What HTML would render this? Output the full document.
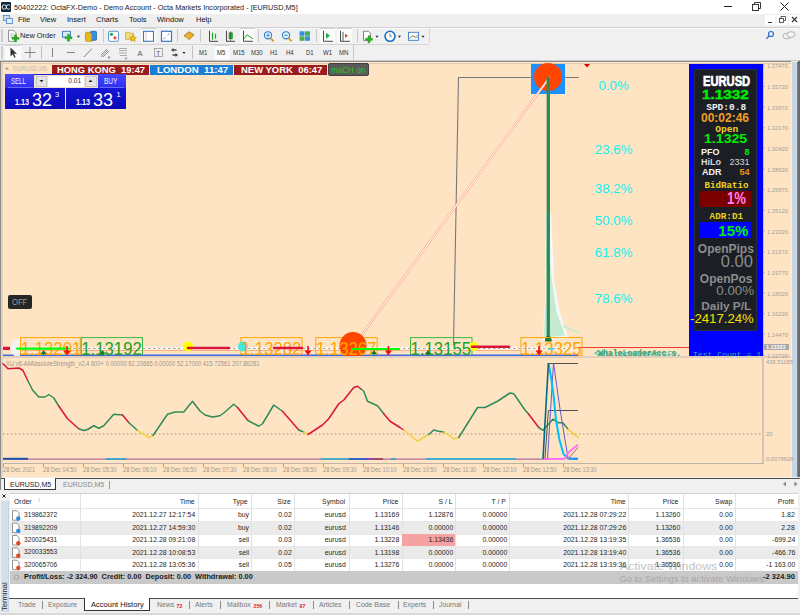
<!DOCTYPE html><html><head><meta charset="utf-8"><style>html,body{margin:0;padding:0;}body{width:800px;height:615px;overflow:hidden;position:relative;background:#f0f0f0;font-family:"Liberation Sans",sans-serif;}div{box-sizing:border-box;}svg{position:absolute;left:0;top:0;}</style></head><body><div style="position:absolute;left:0px;top:0px;width:800px;height:14px;background:#fff;"></div><div style="position:absolute;left:1px;top:2px;width:10px;height:10px;background:#10263a;border-radius:1px;"></div><svg width="800" height="14" style="left:0;top:0"><g fill="none" stroke="#e8eef4" stroke-width="1"><circle cx="4.3" cy="7" r="2.2"/><path d="M9.8 5.3 A2.2 2.2 0 1 0 9.8 8.7"/></g><g stroke="#222" stroke-width="1"><line x1="724" y1="6.5" x2="732" y2="6.5"/></g><g fill="none" stroke="#222" stroke-width="0.9"><rect x="752.5" y="4.5" width="6" height="6"/><path d="M754.5 4.5 V2.5 H760.5 V8.5 H758.5"/></g><g stroke="#222" stroke-width="1"><line x1="780.5" y1="2.5" x2="788.5" y2="10.5"/><line x1="788.5" y1="2.5" x2="780.5" y2="10.5"/></g></svg><div style="position:absolute;left:14px;top:3.6px;font-family:'Liberation Sans', sans-serif;font-size:7.7px;line-height:1;color:#222;font-weight:400;white-space:nowrap;transform:scaleX(0.95);transform-origin:0 0;">50402222: OctaFX-Demo - Demo Account - Octa Markets Incorporated - [EURUSD,M5]</div><div style="position:absolute;left:0px;top:14px;width:800px;height:13px;background:#efefef;"></div><div style="position:absolute;left:0px;top:26.6px;width:800px;height:1px;background:#d0d0d0;"></div><div style="position:absolute;left:0px;top:27.6px;width:800px;height:1px;background:#fafafa;"></div><svg width="20" height="14" style="left:0;top:13px"><rect x="3.5" y="2.5" width="6" height="5" fill="#cfe0f5" stroke="#4a7fc0" stroke-width="0.8"/><rect x="6.5" y="5.5" width="6" height="5" fill="#e4eefa" stroke="#4a7fc0" stroke-width="0.8"/></svg><div style="position:absolute;left:17.5px;top:16.3px;font-family:'Liberation Sans', sans-serif;font-size:8.1px;line-height:1;color:#111;font-weight:400;white-space:nowrap;transform:scaleX(0.93);transform-origin:0 0;">File</div><div style="position:absolute;left:39.8px;top:16.3px;font-family:'Liberation Sans', sans-serif;font-size:8.1px;line-height:1;color:#111;font-weight:400;white-space:nowrap;transform:scaleX(0.93);transform-origin:0 0;">View</div><div style="position:absolute;left:66.5px;top:16.3px;font-family:'Liberation Sans', sans-serif;font-size:8.1px;line-height:1;color:#111;font-weight:400;white-space:nowrap;transform:scaleX(0.93);transform-origin:0 0;">Insert</div><div style="position:absolute;left:96px;top:16.3px;font-family:'Liberation Sans', sans-serif;font-size:8.1px;line-height:1;color:#111;font-weight:400;white-space:nowrap;transform:scaleX(0.93);transform-origin:0 0;">Charts</div><div style="position:absolute;left:128.6px;top:16.3px;font-family:'Liberation Sans', sans-serif;font-size:8.1px;line-height:1;color:#111;font-weight:400;white-space:nowrap;transform:scaleX(0.93);transform-origin:0 0;">Tools</div><div style="position:absolute;left:157.4px;top:16.3px;font-family:'Liberation Sans', sans-serif;font-size:8.1px;line-height:1;color:#111;font-weight:400;white-space:nowrap;transform:scaleX(0.93);transform-origin:0 0;">Window</div><div style="position:absolute;left:195.9px;top:16.3px;font-family:'Liberation Sans', sans-serif;font-size:8.1px;line-height:1;color:#111;font-weight:400;white-space:nowrap;transform:scaleX(0.93);transform-origin:0 0;">Help</div><svg width="40" height="14" style="left:762px;top:13px"><rect x="3" y="2" width="10" height="10" fill="#fff"/><rect x="14.5" y="2" width="11" height="10" fill="#fff"/><rect x="27" y="2" width="11" height="10" fill="#fff"/><line x1="6" y1="9.5" x2="10" y2="9.5" stroke="#333" stroke-width="1"/><rect x="17.5" y="5.5" width="4" height="4" fill="none" stroke="#333" stroke-width="0.8"/><path d="M19 5.5V3.5H23.5V7.5H21.5" fill="none" stroke="#333" stroke-width="0.8"/><path d="M30 4L35 9M35 4L30 9" stroke="#333" stroke-width="1.1"/></svg><div style="position:absolute;left:0px;top:28.6px;width:430px;height:14.5px;background:#f0f0f0;"></div><div style="position:absolute;left:0px;top:43.5px;width:429px;height:1px;background:#d4d4d4;"></div><div style="position:absolute;left:0px;top:60px;width:800px;height:1px;background:#c8c8c8;"></div><svg width="800" height="62" style="left:0;top:0"><line x1="2" y1="29" x2="2" y2="42" stroke="#b8b8b8" stroke-width="1.2"/><line x1="2" y1="46" x2="2" y2="59" stroke="#b8b8b8" stroke-width="1.2"/><line x1="103.5" y1="29" x2="103.5" y2="42" stroke="#c8c8c8" stroke-width="1"/><line x1="177.5" y1="29" x2="177.5" y2="42" stroke="#c8c8c8" stroke-width="1"/><line x1="200.5" y1="29" x2="200.5" y2="42" stroke="#c8c8c8" stroke-width="1"/><line x1="258.5" y1="29" x2="258.5" y2="42" stroke="#c8c8c8" stroke-width="1"/><line x1="316.5" y1="29" x2="316.5" y2="42" stroke="#c8c8c8" stroke-width="1"/><line x1="357.5" y1="29" x2="357.5" y2="42" stroke="#c8c8c8" stroke-width="1"/><line x1="429.5" y1="27" x2="429.5" y2="43" stroke="#d8d8d8" stroke-width="1"/><line x1="41.5" y1="46" x2="41.5" y2="59" stroke="#c0c0c0" stroke-width="1"/><line x1="192.5" y1="46" x2="192.5" y2="59" stroke="#c0c0c0" stroke-width="1"/><line x1="353.5" y1="44" x2="353.5" y2="60" stroke="#c8c8c8" stroke-width="1"/><rect x="141" y="28" width="15" height="15" fill="#fbfbfb"/><line x1="141" y1="28.5" x2="156" y2="28.5" stroke="#d4d4d4"/><rect x="240" y="28" width="15" height="15" fill="#fbfbfb"/><line x1="240" y1="28.5" x2="255" y2="28.5" stroke="#d4d4d4"/><rect x="320" y="28" width="15" height="15" fill="#fbfbfb"/><line x1="320" y1="28.5" x2="335" y2="28.5" stroke="#d4d4d4"/><rect x="337" y="28" width="15" height="15" fill="#fbfbfb"/><line x1="337" y1="28.5" x2="352" y2="28.5" stroke="#d4d4d4"/><rect x="5" y="45" width="16" height="15" fill="#fbfbfb"/><line x1="5" y1="45.5" x2="21" y2="45.5" stroke="#d4d4d4"/><rect x="214.5" y="45" width="15.0" height="15" fill="#fbfbfb"/><line x1="214.5" y1="45.5" x2="229.5" y2="45.5" stroke="#d4d4d4"/><g transform="translate(0,0.8)"><path d="M8.5 29.5H13.5L16 32V40.5H8.5Z" fill="#fff" stroke="#777" stroke-width="0.8"/><path d="M10 33h4M10 35h4M10 37h3" stroke="#999" stroke-width="0.6"/><path d="M14.5 34h2v2.5h2.5v2h-2.5v2.5h-2v-2.5h-2.5v-2h2.5z" fill="#22aa22" stroke="#118811" stroke-width="0.4"/><rect x="62.5" y="30.5" width="8" height="6" fill="#d8e8f8" stroke="#3a78c0" stroke-width="0.9"/><path d="M67.5 33.5h2v2.5h2.5v2h-2.5v2.5h-2v-2.5h-2.5v-2h2.5z" fill="#22bb22" stroke="#118811" stroke-width="0.4"/><path d="M77 35h3l-1.5 2z" fill="#222"/><rect x="85.5" y="31.5" width="7" height="9" rx="1" fill="#f0c020" stroke="#b08000" stroke-width="0.7"/><rect x="90.5" y="30.5" width="6" height="9" rx="1" fill="#3a8ee0" stroke="#2060a0" stroke-width="0.7"/><rect x="86.5" y="32.5" width="5" height="7" fill="#e8b818"/><rect x="108.5" y="30.5" width="10" height="10" rx="1.5" fill="#fff" stroke="#4f8fd0" stroke-width="0.9"/><circle cx="111.5" cy="33.5" r="1.6" fill="#22aa44"/><circle cx="115" cy="37" r="1.6" fill="#e05030"/><path d="M125.5 31.5h4l1 1h3v6h-8z" fill="#f2dc80" stroke="#c0a030" stroke-width="0.7"/><path d="M133 34l1.1 2.3 2.4.3-1.8 1.6.5 2.4-2.2-1.2-2.2 1.2.5-2.4-1.8-1.6 2.4-.3z" fill="#f4c400" stroke="#b08800" stroke-width="0.5"/><rect x="143.5" y="30.5" width="10" height="10" fill="#fff" stroke="#3a78c0" stroke-width="1.1"/><line x1="146" y1="31" x2="146" y2="40" stroke="#e07070" stroke-width="0.8" stroke-dasharray="1 1"/><rect x="161.5" y="30.5" width="10" height="10" fill="#fff" stroke="#3a78c0" stroke-width="1.2"/><path d="M163.5 38.5l2-2M169.5 32.5l-2 2" stroke="#3a78c0" stroke-width="0.8"/><path d="M184 35l5-4 5 3-5 5z" fill="#e8b030" stroke="#a07010" stroke-width="0.8"/><path d="M185 36l4 3" stroke="#fff3c0" stroke-width="0.6"/><path d="M209.5 30v10.5H218" fill="none" stroke="#333" stroke-width="0.9"/><path d="M212.5 32v7M215.5 33v5" stroke="#22aa22" stroke-width="1.2"/><path d="M226.5 30v10.5H235" fill="none" stroke="#333" stroke-width="0.9"/><rect x="229" y="32" width="3.5" height="6" fill="#22bb22" stroke="#118811" stroke-width="0.5"/><line x1="230.7" y1="30.5" x2="230.7" y2="40" stroke="#333" stroke-width="0.6"/><path d="M243.5 30v10.5H253" fill="none" stroke="#333" stroke-width="0.9"/><path d="M244 38l3-4 3 2 3 2" fill="none" stroke="#22aa22" stroke-width="1"/><circle cx="268" cy="34.5" r="3.6" fill="#e8f2fc" stroke="#2a80d0" stroke-width="1.1"/><line x1="270.6" y1="37.2" x2="273.5" y2="40.5" stroke="#d09a20" stroke-width="1.8"/><line x1="266.2" y1="34.5" x2="269.8" y2="34.5" stroke="#2a80d0" stroke-width="0.9"/><line x1="268" y1="32.7" x2="268" y2="36.3" stroke="#2a80d0" stroke-width="0.9"/><circle cx="286" cy="34.5" r="3.6" fill="#e8f2fc" stroke="#2a80d0" stroke-width="1.1"/><line x1="288.6" y1="37.2" x2="291.5" y2="40.5" stroke="#d09a20" stroke-width="1.8"/><line x1="284.2" y1="34.5" x2="287.8" y2="34.5" stroke="#2a80d0" stroke-width="0.9"/><rect x="299.5" y="30.5" width="5" height="4.5" fill="#3a8ee0"/><rect x="305" y="30.5" width="5" height="4.5" fill="#4caf50"/><rect x="299.5" y="35.5" width="5" height="4.5" fill="#4caf50"/><rect x="305" y="35.5" width="5" height="4.5" fill="#3a8ee0"/><path d="M323.5 30v10.5H333" fill="none" stroke="#333" stroke-width="0.9"/><path d="M326 32v6l4-3z" fill="#22aa44"/><path d="M340.5 30v10.5H350" fill="none" stroke="#333" stroke-width="0.9"/><line x1="343" y1="31" x2="343" y2="40" stroke="#333" stroke-width="0.8"/><path d="M345 33v4l3-2z" fill="#e04020"/><path d="M363.5 30.5H368.5L370.5 32.5V39.5H363.5Z" fill="#fff" stroke="#666" stroke-width="0.8"/><path d="M368 35h2v2.5h2.5v2h-2.5v2.5h-2v-2.5h-2.5v-2h2.5z" fill="#22bb22" stroke="#118811" stroke-width="0.4"/><path d="M375.5 35h3l-1.5 2z" fill="#222"/><circle cx="390" cy="35.5" r="5" fill="#fff" stroke="#1a70c0" stroke-width="1.6"/><path d="M390 32.5v3h2" stroke="#555" stroke-width="0.7" fill="none"/><path d="M398 35h3l-1.5 2z" fill="#222"/><rect x="408.5" y="31.5" width="10" height="8" fill="#fff" stroke="#3a78c0" stroke-width="0.9"/><path d="M409.5 37l3-2 3 1 2.5-2" stroke="#e04040" stroke-width="0.6" fill="none"/><path d="M409.5 38l3-3 3 2 2.5-1" stroke="#22aa22" stroke-width="0.6" fill="none"/><path d="M421.5 35h3l-1.5 2z" fill="#222"/></g><circle cx="771" cy="34" r="2.5" fill="none" stroke="#2a70d0" stroke-width="1.2"/><line x1="769.3" y1="35.8" x2="766.5" y2="38.8" stroke="#2a70d0" stroke-width="1.3"/><ellipse cx="787" cy="36" rx="4" ry="2.8" fill="#f4f4f4" stroke="#999" stroke-width="0.7"/><ellipse cx="791" cy="34.5" rx="4" ry="2.8" fill="#f4f4f4" stroke="#999" stroke-width="0.7"/><path d="M10.5 47.5v9l2.2-2.2 1.8 3.5 1.2-.6-1.8-3.4h3z" fill="#333"/><path d="M30 47v11M24.5 52.5h11" stroke="#777" stroke-width="0.9"/><line x1="52.5" y1="48" x2="52.5" y2="57" stroke="#777" stroke-width="0.9"/><line x1="67" y1="52.5" x2="75" y2="52.5" stroke="#777" stroke-width="0.9"/><line x1="84" y1="57" x2="92" y2="48.5" stroke="#777" stroke-width="0.9"/><path d="M101 55l6-6M101 57l7-7M103 57l6-6" stroke="#777" stroke-width="0.8"/><text x="108" y="59" font-size="3.5" fill="#555" font-family="Liberation Sans">E</text><path d="M119 48.5h8M119 50.5h8M119 53h8M120 55.5h7" stroke="#999" stroke-width="0.8"/><text x="125" y="59.5" font-size="3.5" fill="#555" font-family="Liberation Sans">F</text><text x="137.5" y="56" font-size="7.5" fill="#555" font-family="Liberation Sans">A</text><rect x="154.5" y="48.5" width="8" height="8" fill="none" stroke="#888" stroke-width="0.7"/><text x="156.3" y="55.6" font-size="6.5" fill="#555" font-family="Liberation Sans">T</text><path d="M171 50l2.5-2v1.3h3v1.4h-3V52zM178 55l-2.5 2v-1.3h-3v-1.4h3V53z" fill="#444"/><path d="M182.5 52h3l-1.5 2z" fill="#222"/></svg><div style="position:absolute;left:20px;top:31.5px;font-family:'Liberation Sans', sans-serif;font-size:8px;line-height:1;color:#222;font-weight:400;white-space:nowrap;transform:scaleX(0.92);transform-origin:0 0;">New Order</div><div style="position:absolute;left:199.4px;top:49.5px;font-family:'Liberation Sans', sans-serif;font-size:6.3px;line-height:1;color:#333;font-weight:400;white-space:nowrap;transform:scaleX(0.95);transform-origin:0 0;">M1</div><div style="position:absolute;left:217px;top:49.5px;font-family:'Liberation Sans', sans-serif;font-size:6.3px;line-height:1;color:#333;font-weight:400;white-space:nowrap;transform:scaleX(0.95);transform-origin:0 0;">M5</div><div style="position:absolute;left:233px;top:49.5px;font-family:'Liberation Sans', sans-serif;font-size:6.3px;line-height:1;color:#333;font-weight:400;white-space:nowrap;transform:scaleX(0.95);transform-origin:0 0;">M15</div><div style="position:absolute;left:251px;top:49.5px;font-family:'Liberation Sans', sans-serif;font-size:6.3px;line-height:1;color:#333;font-weight:400;white-space:nowrap;transform:scaleX(0.95);transform-origin:0 0;">M30</div><div style="position:absolute;left:270px;top:49.5px;font-family:'Liberation Sans', sans-serif;font-size:6.3px;line-height:1;color:#333;font-weight:400;white-space:nowrap;transform:scaleX(0.95);transform-origin:0 0;">H1</div><div style="position:absolute;left:286px;top:49.5px;font-family:'Liberation Sans', sans-serif;font-size:6.3px;line-height:1;color:#333;font-weight:400;white-space:nowrap;transform:scaleX(0.95);transform-origin:0 0;">H4</div><div style="position:absolute;left:305.5px;top:49.5px;font-family:'Liberation Sans', sans-serif;font-size:6.3px;line-height:1;color:#333;font-weight:400;white-space:nowrap;transform:scaleX(0.95);transform-origin:0 0;">D1</div><div style="position:absolute;left:322.5px;top:49.5px;font-family:'Liberation Sans', sans-serif;font-size:6.3px;line-height:1;color:#333;font-weight:400;white-space:nowrap;transform:scaleX(0.95);transform-origin:0 0;">W1</div><div style="position:absolute;left:339px;top:49.5px;font-family:'Liberation Sans', sans-serif;font-size:6.3px;line-height:1;color:#333;font-weight:400;white-space:nowrap;transform:scaleX(0.95);transform-origin:0 0;">MN</div><div style="position:absolute;left:0px;top:61px;width:800px;height:416px;background:#ffe4c4;"></div><div style="position:absolute;left:0px;top:61px;width:800px;height:1px;background:#8c8c8c;"></div><div style="position:absolute;left:0px;top:61px;width:1px;height:416px;background:#8a8a8a;"></div><div style="position:absolute;left:1px;top:62px;width:2px;height:415px;background:#e6d2bc;"></div><div style="position:absolute;left:3px;top:63px;width:789px;height:1px;background:#e0cdb8;"></div><div style="position:absolute;left:791px;top:61px;width:9px;height:417px;background:#f0f0f0;"></div><div style="position:absolute;left:792px;top:62px;width:5px;height:416px;background:#c6d6e6;"></div><div style="position:absolute;left:797px;top:62px;width:1px;height:416px;background:#5a8ab0;"></div><div style="position:absolute;left:798px;top:61px;width:2px;height:417px;background:#6a6a6a;"></div><svg width="800" height="615" style="left:0;top:0"><line x1="763" y1="64" x2="763" y2="356" stroke="#a0a0a0" stroke-width="1"/><line x1="763" y1="358" x2="763" y2="464" stroke="#a8a8a8" stroke-width="1"/><rect x="3" y="356" width="788" height="2" fill="#e2cfbb"/><line x1="3" y1="463.5" x2="763" y2="463.5" stroke="#bcb4aa" stroke-width="1"/><line x1="3.5" y1="464" x2="3.5" y2="467" stroke="#a0a0a0" stroke-width="1"/><line x1="43.5" y1="464" x2="43.5" y2="467" stroke="#a0a0a0" stroke-width="1"/><line x1="83.5" y1="464" x2="83.5" y2="467" stroke="#a0a0a0" stroke-width="1"/><line x1="123.5" y1="464" x2="123.5" y2="467" stroke="#a0a0a0" stroke-width="1"/><line x1="163.5" y1="464" x2="163.5" y2="467" stroke="#a0a0a0" stroke-width="1"/><line x1="203.5" y1="464" x2="203.5" y2="467" stroke="#a0a0a0" stroke-width="1"/><line x1="243.5" y1="464" x2="243.5" y2="467" stroke="#a0a0a0" stroke-width="1"/><line x1="283.5" y1="464" x2="283.5" y2="467" stroke="#a0a0a0" stroke-width="1"/><line x1="323.5" y1="464" x2="323.5" y2="467" stroke="#a0a0a0" stroke-width="1"/><line x1="363.5" y1="464" x2="363.5" y2="467" stroke="#a0a0a0" stroke-width="1"/><line x1="403.5" y1="464" x2="403.5" y2="467" stroke="#a0a0a0" stroke-width="1"/><line x1="443.5" y1="464" x2="443.5" y2="467" stroke="#a0a0a0" stroke-width="1"/><line x1="483.5" y1="464" x2="483.5" y2="467" stroke="#a0a0a0" stroke-width="1"/><line x1="523.5" y1="464" x2="523.5" y2="467" stroke="#a0a0a0" stroke-width="1"/><line x1="563.5" y1="464" x2="563.5" y2="467" stroke="#a0a0a0" stroke-width="1"/><line x1="763" y1="65.8" x2="764.8" y2="65.8" stroke="#a8a8a8" stroke-width="1"/><line x1="763" y1="86.4" x2="764.8" y2="86.4" stroke="#a8a8a8" stroke-width="1"/><line x1="763" y1="107.1" x2="764.8" y2="107.1" stroke="#a8a8a8" stroke-width="1"/><line x1="763" y1="127.8" x2="764.8" y2="127.8" stroke="#a8a8a8" stroke-width="1"/><line x1="763" y1="148.4" x2="764.8" y2="148.4" stroke="#a8a8a8" stroke-width="1"/><line x1="763" y1="169.1" x2="764.8" y2="169.1" stroke="#a8a8a8" stroke-width="1"/><line x1="763" y1="189.7" x2="764.8" y2="189.7" stroke="#a8a8a8" stroke-width="1"/><line x1="763" y1="210.3" x2="764.8" y2="210.3" stroke="#a8a8a8" stroke-width="1"/><line x1="763" y1="231.0" x2="764.8" y2="231.0" stroke="#a8a8a8" stroke-width="1"/><line x1="763" y1="251.6" x2="764.8" y2="251.6" stroke="#a8a8a8" stroke-width="1"/><line x1="763" y1="272.3" x2="764.8" y2="272.3" stroke="#a8a8a8" stroke-width="1"/><line x1="763" y1="292.9" x2="764.8" y2="292.9" stroke="#a8a8a8" stroke-width="1"/><line x1="763" y1="313.6" x2="764.8" y2="313.6" stroke="#a8a8a8" stroke-width="1"/><line x1="763" y1="334.2" x2="764.8" y2="334.2" stroke="#a8a8a8" stroke-width="1"/><line x1="763" y1="354.9" x2="764.8" y2="354.9" stroke="#a8a8a8" stroke-width="1"/><defs><clipPath id="mc"><rect x="3" y="62" width="760" height="294"/></clipPath></defs><g clip-path="url(#mc)"><path d="M453.5 345L458.5 77.5H579" fill="none" stroke="#787878" stroke-width="1.1"/><rect x="531" y="64" width="34" height="30" fill="#1e90ff"/><circle cx="548" cy="77" r="14" fill="#ff4500"/><path d="M584 64h6l-3 3.5z" fill="#e00000"/><path d="M546 212 L545 300 L542.5 341 L568 338 L559 312 L553.5 282 L550.5 212 Z" fill="#eef8f8" /><path d="M546.5 214 L545.5 300 L543.5 338 L549 338 L549 214 Z" fill="#c8ecd4"/><path d="M549 250 L549 337 L565 335.5 L556.5 312 L552 282 Z" fill="#c4ead2"/><path d="M550.5 215 L553.5 282 L559 312 L567.5 338" fill="none" stroke="#f4fbff" stroke-width="1.2"/><path d="M563 326 L579 333" stroke="#c4ead2" stroke-width="1.5"/><line x1="549.8" y1="77" x2="354.4" y2="345" stroke="#ff9a78" stroke-width="2.3"/><line x1="549.8" y1="77" x2="354.4" y2="345" stroke="#ffffff" stroke-width="1.1"/><line x1="548.3" y1="77" x2="548.3" y2="338" stroke="#2e8b57" stroke-width="3.3"/><path d="M544.8 341.5 Q545 336 548.3 335.5 Q551.6 336 551.8 341.5z" fill="#1a7a30"/><line x1="578" y1="347.5" x2="690" y2="347.5" stroke="#f03a30" stroke-width="1"/><line x1="3" y1="348.5" x2="578" y2="348.5" stroke="#ffffff" stroke-width="1.8"/><line x1="3" y1="348.5" x2="578" y2="348.5" stroke="#909090" stroke-width="0.8" stroke-dasharray="2.5 2.5"/><line x1="20" y1="350.5" x2="520" y2="350.5" stroke="#ffa060" stroke-width="0.8"/><line x1="3" y1="348.8" x2="10" y2="348.8" stroke="#dc143c" stroke-width="2.4"/><rect x="20.5" y="337.6" width="59.7" height="18" fill="none" stroke="#ffa500" stroke-width="1"/><rect x="81.2" y="337.6" width="61.3" height="18" fill="none" stroke="#3cb83c" stroke-width="1"/><rect x="240.9" y="337.6" width="61.099999999999994" height="18" fill="none" stroke="#ffa500" stroke-width="1"/><rect x="315.8" y="337.6" width="61.30000000000001" height="18" fill="none" stroke="#ffa500" stroke-width="1"/><rect x="410.5" y="337.6" width="61.5" height="18" fill="none" stroke="#3cb83c" stroke-width="1"/><rect x="521.0" y="337.6" width="61.0" height="18" fill="none" stroke="#ffa500" stroke-width="1"/><line x1="3" y1="355.4" x2="578" y2="355.4" stroke="#4169e1" stroke-width="1.6"/><path d="M20 338.5 A9.5 9.5 0 0 0 20 357.5 Z" fill="#f2f2f6"/><circle cx="188" cy="346.5" r="5" fill="#ffff00"/><circle cx="474" cy="346.5" r="4.5" fill="#ffff00"/><circle cx="243" cy="346.5" r="5" fill="#40e8e8"/><circle cx="284" cy="346" r="6" fill="#f4f0ec"/><circle cx="353" cy="345.5" r="13.5" fill="#ff4500"/><text transform="translate(20.8,355.3) scale(0.905,1)" font-family="Liberation Sans" font-size="18.5" fill="#ffa500">1.13201</text><text transform="translate(81.3,355.3) scale(0.905,1)" font-family="Liberation Sans" font-size="18.5" fill="#22a022">1.13192</text><text transform="translate(240.9,355.3) scale(0.905,1)" font-family="Liberation Sans" font-size="18.5" fill="#ffa500">1.13282</text><text transform="translate(315.9,355.3) scale(0.905,1)" font-family="Liberation Sans" font-size="18.5" fill="#ffa500">1.13267</text><text transform="translate(410.6,355.3) scale(0.905,1)" font-family="Liberation Sans" font-size="18.5" fill="#22a022">1.13155</text><text transform="translate(521.1,355.3) scale(0.905,1)" font-family="Liberation Sans" font-size="18.5" fill="#ffa500">1.13325</text><line x1="188" y1="348" x2="229" y2="348" stroke="#dc143c" stroke-width="2.6" stroke-linecap="round"/><line x1="274" y1="348" x2="302" y2="348" stroke="#dc143c" stroke-width="2.6" stroke-linecap="round"/><line x1="472" y1="346.8" x2="509" y2="346.8" stroke="#dc143c" stroke-width="2.6" stroke-linecap="round"/><line x1="3" y1="348" x2="10" y2="348" stroke="#dc143c" stroke-width="2.4"/><line x1="17" y1="348.6" x2="68" y2="348.6" stroke="#00ff00" stroke-width="2.2" stroke-linecap="round"/><line x1="352" y1="349" x2="399" y2="349" stroke="#00ff00" stroke-width="2.2" stroke-linecap="round"/><path d="M40.5 354l3-4 3 4z" fill="#1a7a1a"/><line x1="43.5" y1="352" x2="43.5" y2="356" stroke="#1a7a1a" stroke-width="1"/><path d="M99.5 354l3-4 3 4z" fill="#1a7a1a"/><line x1="102.5" y1="352" x2="102.5" y2="356" stroke="#1a7a1a" stroke-width="1"/><path d="M371 354l3-4 3 4z" fill="#1a7a1a"/><line x1="374" y1="352" x2="374" y2="356" stroke="#1a7a1a" stroke-width="1"/><path d="M425 354l3-4 3 4z" fill="#1a7a1a"/><line x1="428" y1="352" x2="428" y2="356" stroke="#1a7a1a" stroke-width="1"/><path d="M63.5 350.5l3.5 5 3.5-5z" fill="#ee1111"/><line x1="67" y1="346" x2="67" y2="352" stroke="#ee1111" stroke-width="1.6"/><path d="M304.5 350.5l3.5 5 3.5-5z" fill="#ee1111"/><line x1="308" y1="346" x2="308" y2="352" stroke="#ee1111" stroke-width="1.6"/><path d="M384.9 350.5l3.5 5 3.5-5z" fill="#ee1111"/><line x1="388.4" y1="346" x2="388.4" y2="352" stroke="#ee1111" stroke-width="1.6"/><path d="M535.5 350.5l3.5 5 3.5-5z" fill="#ee1111"/><line x1="539" y1="346" x2="539" y2="352" stroke="#ee1111" stroke-width="1.6"/><path d="M547 350l5-3 2 3z" fill="#40e0ff"/></g><line x1="3" y1="434" x2="763" y2="434" stroke="#a09080" stroke-width="1" stroke-dasharray="1.5 2.5"/><polyline points="3,363.75 8,368.75 19,368 23,370.5 27.5,380" fill="none" stroke="#dc143c" stroke-width="1.5" stroke-linejoin="round" stroke-linecap="round"/><polyline points="27.5,380 32.5,390 38.75,397 45,397 48.75,394.5 53.75,398 58.75,406" fill="none" stroke="#2e8b57" stroke-width="1.5" stroke-linejoin="round" stroke-linecap="round"/><polyline points="58.75,406 67.5,418.75 78.75,428.75" fill="none" stroke="#dc143c" stroke-width="1.5" stroke-linejoin="round" stroke-linecap="round"/><polyline points="78.75,428.75 83.75,430.5 87.5,429.5 93.75,425.75 98.75,428.25 103.75,425.75 113.75,414.25 122.5,415" fill="none" stroke="#2e8b57" stroke-width="1.5" stroke-linejoin="round" stroke-linecap="round"/><polyline points="122.5,415 128.75,422.5" fill="none" stroke="#dc143c" stroke-width="1.5" stroke-linejoin="round" stroke-linecap="round"/><polyline points="128.75,422.5 137.5,430.5" fill="none" stroke="#2e8b57" stroke-width="1.5" stroke-linejoin="round" stroke-linecap="round"/><polyline points="137.5,430.5 148.75,437.5 153,435.5" fill="none" stroke="#f2d040" stroke-width="1.5" stroke-linejoin="round" stroke-linecap="round"/><polyline points="153,435.5 167.5,414.25 175,412 183.75,412 192.5,401.25 200,411 205,415 212.5,417 220,415.75 223.75,413 233.75,404.25 237.5,407.5" fill="none" stroke="#2e8b57" stroke-width="1.5" stroke-linejoin="round" stroke-linecap="round"/><polyline points="237.5,407.5 248,420.5" fill="none" stroke="#dc143c" stroke-width="1.5" stroke-linejoin="round" stroke-linecap="round"/><polyline points="248,420.5 258.75,426.25 262.5,423.75 273.75,405 282.5,411.25" fill="none" stroke="#2e8b57" stroke-width="1.5" stroke-linejoin="round" stroke-linecap="round"/><polyline points="282.5,411.25 298.75,430" fill="none" stroke="#dc143c" stroke-width="1.5" stroke-linejoin="round" stroke-linecap="round"/><polyline points="298.75,430 303.75,432" fill="none" stroke="#2e8b57" stroke-width="1.5" stroke-linejoin="round" stroke-linecap="round"/><polyline points="303.75,432 308,434.5" fill="none" stroke="#f2d040" stroke-width="1.5" stroke-linejoin="round" stroke-linecap="round"/><polyline points="308,434.5 322.5,425 328.75,418.75 338.75,403.75 343.75,400 353.75,387.5 357.5,386.25 361,389" fill="none" stroke="#dc143c" stroke-width="1.5" stroke-linejoin="round" stroke-linecap="round"/><polyline points="361,389 363.75,391.25 367.5,401.25 377.5,405.75 383.75,413.75" fill="none" stroke="#2e8b57" stroke-width="1.5" stroke-linejoin="round" stroke-linecap="round"/><polyline points="383.75,413.75 390,421.25 400,427.5 403.75,430" fill="none" stroke="#dc143c" stroke-width="1.5" stroke-linejoin="round" stroke-linecap="round"/><polyline points="403.75,430 417.5,441.25 428.75,434.5" fill="none" stroke="#f2d040" stroke-width="1.5" stroke-linejoin="round" stroke-linecap="round"/><polyline points="428.75,434.5 433.75,430 438.75,431.25 443.75,432" fill="none" stroke="#2e8b57" stroke-width="1.5" stroke-linejoin="round" stroke-linecap="round"/><polyline points="443.75,432 453.75,438.75 458.75,437.5" fill="none" stroke="#f2d040" stroke-width="1.5" stroke-linejoin="round" stroke-linecap="round"/><polyline points="458.75,437.5 477.5,407.5 485,407.5 497.5,401.25 510,393 513.75,393.75 525,410 528.75,414.25" fill="none" stroke="#2e8b57" stroke-width="1.5" stroke-linejoin="round" stroke-linecap="round"/><polyline points="528.75,414.25 538.75,427.5" fill="none" stroke="#dc143c" stroke-width="1.5" stroke-linejoin="round" stroke-linecap="round"/><polyline points="538.75,427.5 543,430.3 552.9,419.2 558.3,422.7 562.8,422.7 568.2,429.4" fill="none" stroke="#2e8b57" stroke-width="1.5" stroke-linejoin="round" stroke-linecap="round"/><polyline points="568.2,429.4 578,437.4" fill="none" stroke="#f2d040" stroke-width="1.5" stroke-linejoin="round" stroke-linecap="round"/><line x1="3" y1="459.2" x2="548" y2="459.2" stroke="#b06a98" stroke-width="1.3"/><line x1="3" y1="458.8" x2="28" y2="458.8" stroke="#1f50b0" stroke-width="2"/><line x1="106" y1="459" x2="126" y2="459" stroke="#30a8d0" stroke-width="1.8"/><line x1="321" y1="459" x2="348.7" y2="459" stroke="#40b0c8" stroke-width="1.8"/><line x1="348.7" y1="459" x2="366" y2="459" stroke="#2060d0" stroke-width="1.8"/><line x1="366" y1="459" x2="371" y2="459" stroke="#8040c0" stroke-width="1.8"/><line x1="371" y1="459" x2="383" y2="459" stroke="#a04060" stroke-width="1.8"/><line x1="391" y1="459" x2="396" y2="459" stroke="#30a8d0" stroke-width="1.8"/><line x1="426" y1="459" x2="516" y2="459" stroke="#40b0d0" stroke-width="1.8"/><polyline points="544.9,459 548.4,410.5 578,410.5" fill="none" stroke="#505050" stroke-width="1"/><line x1="548.4" y1="363.5" x2="578" y2="363.5" stroke="#505050" stroke-width="1"/><polyline points="547.5,459 553.5,363 560,409 568,458" fill="none" stroke="#6a5acd" stroke-width="1"/><polyline points="548.6,363.5 551.5,380 553.5,395 556,420 559.5,440 563.5,454 568,458.5 578,458.8" fill="none" stroke="#00bfff" stroke-width="2" stroke-linejoin="round"/><line x1="543" y1="458.9" x2="548.4" y2="363" stroke="#006b80" stroke-width="1.6"/><polyline points="544,458.8 564.6,458.8 569,451.8 578,444.6" fill="none" stroke="#ff66ff" stroke-width="1.8"/><line x1="568" y1="459" x2="578" y2="447.3" stroke="#c05a5a" stroke-width="1"/><line x1="569" y1="458.8" x2="578" y2="458.8" stroke="#1e90ff" stroke-width="2"/></svg><svg width="12" height="8" style="left:0;top:64px"><path d="M5 5.5l2-2.5 2 2.5z" fill="#9a9a9a"/></svg><div style="position:absolute;left:13px;top:65.66px;font-family:'Liberation Sans', sans-serif;font-size:6.5px;line-height:1;color:#c4b8a8;font-weight:400;white-space:nowrap;transform:scaleX(0.89);transform-origin:0 0;">EURUSD,M5</div><div style="position:absolute;left:52px;top:65px;width:97px;height:10px;background:#9b1c1c;"></div><div style="position:absolute;left:150.4px;top:65px;width:82.3px;height:10px;background:#1a7fd4;"></div><div style="position:absolute;left:233.8px;top:65px;width:93.4px;height:10px;background:#9b1c1c;"></div><div style="position:absolute;left:57px;top:65.71px;font-family:'Liberation Sans', sans-serif;font-size:8.4px;line-height:1;color:#fff;font-weight:700;white-space:nowrap;transform:scaleX(1.12);transform-origin:0 0;">HONG KONG&nbsp; 19:47</div><div style="position:absolute;left:156.6px;top:65.71px;font-family:'Liberation Sans', sans-serif;font-size:8.4px;line-height:1;color:#fff;font-weight:700;white-space:nowrap;transform:scaleX(1.15);transform-origin:0 0;">LONDON&nbsp; 11:47</div><div style="position:absolute;left:240.5px;top:65.71px;font-family:'Liberation Sans', sans-serif;font-size:8.4px;line-height:1;color:#fff;font-weight:700;white-space:nowrap;transform:scaleX(1.13);transform-origin:0 0;">NEW YORK&nbsp; 06:47</div><div style="position:absolute;left:328.4px;top:63.4px;width:40.6px;height:12.4px;background:#5a5a5a;border:1px solid #404040;border-radius:2px;"></div><div style="position:absolute;left:331.4px;top:65.63px;font-family:'Liberation Sans', sans-serif;font-size:9px;line-height:1;color:#22c822;font-weight:400;white-space:nowrap;transform:scaleX(0.9);transform-origin:0 0;">maCH on</div><div style="position:absolute;left:5px;top:74px;width:60px;height:35px;background:linear-gradient(#1c1ce8,#0a0ab8);"></div><div style="position:absolute;left:66.3px;top:74px;width:59.7px;height:35px;background:linear-gradient(#1c1ce8,#0a0ab8);"></div><div style="position:absolute;left:5px;top:74px;width:29px;height:13.5px;background:linear-gradient(#4848ff,#2e2ef0);"></div><div style="position:absolute;left:97.5px;top:74px;width:28.5px;height:13.5px;background:linear-gradient(#4848ff,#2e2ef0);"></div><div style="position:absolute;left:8px;top:87px;width:25px;height:1px;background:#6a6aff;"></div><div style="position:absolute;left:100px;top:87px;width:24px;height:1px;background:#6a6aff;"></div><div style="position:absolute;left:34px;top:74.5px;width:63.5px;height:13px;background:#f0e0cc;"></div><div style="position:absolute;left:35.5px;top:75.5px;width:11.5px;height:11px;background:#e4e4e4;border:1px solid #c8c8c8;"></div><div style="position:absolute;left:47.5px;top:75.5px;width:36.5px;height:11px;background:#fff;"></div><div style="position:absolute;left:84.5px;top:75.5px;width:12px;height:11px;background:#e4e4e4;border:1px solid #c8c8c8;"></div><svg width="100" height="14" style="left:0;top:74px"><path d="M39.5 6l2 2.2 2-2.2z" fill="#222"/><path d="M88.5 8l2-2.2 2 2.2z" fill="#222"/></svg><div style="position:absolute;right:719px;top:78.16px;font-family:'Liberation Sans', sans-serif;font-size:6.5px;line-height:1;color:#333;font-weight:400;white-space:nowrap;text-align:right;">0.01</div><div style="position:absolute;left:11.4px;top:76.91px;font-family:'Liberation Sans', sans-serif;font-size:8.4px;line-height:1;color:#f4f4ff;font-weight:400;white-space:nowrap;transform:scaleX(0.72);transform-origin:0 0;">SELL</div><div style="position:absolute;left:103.5px;top:76.91px;font-family:'Liberation Sans', sans-serif;font-size:8.4px;line-height:1;color:#f4f4ff;font-weight:400;white-space:nowrap;transform:scaleX(0.77);transform-origin:0 0;">BUY</div><div style="position:absolute;left:14.5px;top:98.19px;font-family:'Liberation Sans', sans-serif;font-size:8.5px;line-height:1;color:#fff;font-weight:700;white-space:nowrap;transform:scaleX(0.85);transform-origin:0 0;">1.13</div><div style="position:absolute;left:32px;top:89.53px;font-family:'Liberation Sans', sans-serif;font-size:19px;line-height:1;color:#fff;font-weight:400;white-space:nowrap;transform:scaleX(0.95);transform-origin:0 0;">32</div><div style="position:absolute;left:55px;top:91.03px;font-family:'Liberation Sans', sans-serif;font-size:7.5px;line-height:1;color:#fff;font-weight:400;white-space:nowrap;">3</div><div style="position:absolute;left:75.5px;top:98.19px;font-family:'Liberation Sans', sans-serif;font-size:8.5px;line-height:1;color:#fff;font-weight:700;white-space:nowrap;transform:scaleX(0.85);transform-origin:0 0;">1.13</div><div style="position:absolute;left:93px;top:89.53px;font-family:'Liberation Sans', sans-serif;font-size:19px;line-height:1;color:#fff;font-weight:400;white-space:nowrap;transform:scaleX(0.95);transform-origin:0 0;">33</div><div style="position:absolute;left:116.5px;top:91.03px;font-family:'Liberation Sans', sans-serif;font-size:7.5px;line-height:1;color:#fff;font-weight:400;white-space:nowrap;">1</div><div style="position:absolute;left:7.8px;top:294.7px;width:23.8px;height:14px;background:#262626;border-radius:2px;"></div><div style="position:absolute;left:11.5px;top:296.76px;font-family:'Liberation Sans', sans-serif;font-size:9.5px;line-height:1;color:#9a9a9a;font-weight:400;white-space:nowrap;transform:scaleX(0.8);transform-origin:0 0;">OFF</div><div style="position:absolute;left:598.5px;top:79.07px;font-family:'Liberation Sans', sans-serif;font-size:13.3px;line-height:1;color:#10f0f0;font-weight:400;white-space:nowrap;">0.0%</div><div style="position:absolute;left:594.8px;top:143.47px;font-family:'Liberation Sans', sans-serif;font-size:13.3px;line-height:1;color:#10f0f0;font-weight:400;white-space:nowrap;">23.6%</div><div style="position:absolute;left:594.8px;top:181.67px;font-family:'Liberation Sans', sans-serif;font-size:13.3px;line-height:1;color:#10f0f0;font-weight:400;white-space:nowrap;">38.2%</div><div style="position:absolute;left:594.8px;top:213.67px;font-family:'Liberation Sans', sans-serif;font-size:13.3px;line-height:1;color:#10f0f0;font-weight:400;white-space:nowrap;">50.0%</div><div style="position:absolute;left:594.8px;top:246.07px;font-family:'Liberation Sans', sans-serif;font-size:13.3px;line-height:1;color:#10f0f0;font-weight:400;white-space:nowrap;">61.8%</div><div style="position:absolute;left:594.8px;top:291.77px;font-family:'Liberation Sans', sans-serif;font-size:13.3px;line-height:1;color:#10f0f0;font-weight:400;white-space:nowrap;">78.6%</div><div style="position:absolute;left:689.4px;top:64.4px;width:73.3px;height:291.6px;background:#0000ff;"></div><div style="position:absolute;left:694.3px;top:69px;width:62.5px;height:261.5px;background:#1b1f25;border:1px solid #2c3038;"></div><div style="position:absolute;left:702.8px;top:73.91px;font-family:'Liberation Sans', sans-serif;font-size:14.5px;line-height:1;color:#fff;font-weight:700;white-space:nowrap;transform:scaleX(0.77);transform-origin:0 0;-webkit-text-stroke:0.7px #fff;">EURUSD</div><div style="position:absolute;left:701.6px;top:88.25px;font-family:'Liberation Sans', sans-serif;font-size:13.5px;line-height:1;color:#00ee00;font-weight:700;white-space:nowrap;transform:scaleX(1.13);transform-origin:0 0;-webkit-text-stroke:0.4px #00ee00;">1.1332</div><div style="position:absolute;left:706.2px;top:102.95px;font-family:'Liberation Mono', monospace;font-size:9.5px;line-height:1;color:#f0f0f0;font-weight:700;white-space:nowrap;">SPD:0.8</div><div style="position:absolute;left:700.5px;top:111.88px;font-family:'Liberation Sans', sans-serif;font-size:12.5px;line-height:1;color:#f0a020;font-weight:700;white-space:nowrap;transform:scaleX(0.96);transform-origin:0 0;">00:02:46</div><div style="position:absolute;left:715.3px;top:124.95px;font-family:'Liberation Mono', monospace;font-size:9.5px;line-height:1;color:#f0d020;font-weight:700;white-space:nowrap;">Open</div><div style="position:absolute;left:703.7px;top:133.38px;font-family:'Liberation Sans', sans-serif;font-size:12.5px;line-height:1;color:#00ee00;font-weight:700;white-space:nowrap;transform:scaleX(1.13);transform-origin:0 0;">1.1325</div><div style="position:absolute;left:701px;top:148.43px;font-family:'Liberation Sans', sans-serif;font-size:9px;line-height:1;color:#f4f4f4;font-weight:700;white-space:nowrap;">PFO</div><div style="position:absolute;right:50.5px;top:148.43px;font-family:'Liberation Sans', sans-serif;font-size:9px;line-height:1;color:#00ee00;font-weight:700;white-space:nowrap;text-align:right;">8</div><div style="position:absolute;left:701px;top:157.83px;font-family:'Liberation Sans', sans-serif;font-size:9px;line-height:1;color:#d8d8d8;font-weight:700;white-space:nowrap;">HiLo</div><div style="position:absolute;right:50.5px;top:157.83px;font-family:'Liberation Sans', sans-serif;font-size:9px;line-height:1;color:#d8d8d8;font-weight:400;white-space:nowrap;text-align:right;">2331</div><div style="position:absolute;left:702px;top:167.83px;font-family:'Liberation Sans', sans-serif;font-size:9px;line-height:1;color:#f4f4f4;font-weight:700;white-space:nowrap;">ADR</div><div style="position:absolute;right:50.5px;top:167.83px;font-family:'Liberation Sans', sans-serif;font-size:9px;line-height:1;color:#f09010;font-weight:700;white-space:nowrap;text-align:right;">54</div><div style="position:absolute;left:704.5px;top:180.99px;font-family:'Liberation Mono', monospace;font-size:9.2px;line-height:1;color:#f0d020;font-weight:700;white-space:nowrap;">BidRatio</div><div style="position:absolute;left:699.4px;top:191.1px;width:51.6px;height:16.1px;background:#7a0000;"></div><div style="position:absolute;left:726.7px;top:190.92px;font-family:'Liberation Sans', sans-serif;font-size:16px;line-height:1;color:#ff80ff;font-weight:700;white-space:nowrap;transform:scaleX(0.82);transform-origin:0 0;">1%</div><div style="position:absolute;left:709.6px;top:211.78px;font-family:'Liberation Mono', monospace;font-size:9.3px;line-height:1;color:#f0d020;font-weight:700;white-space:nowrap;">ADR:D1</div><div style="position:absolute;left:699.4px;top:221.8px;width:52.1px;height:16.2px;background:#0000ff;"></div><div style="position:absolute;left:718.3px;top:222.85px;font-family:'Liberation Sans', sans-serif;font-size:15px;line-height:1;color:#00ee00;font-weight:700;white-space:nowrap;">15%</div><div style="position:absolute;left:697.8px;top:242.94px;font-family:'Liberation Sans', sans-serif;font-size:12px;line-height:1;color:#8c8c8c;font-weight:700;white-space:nowrap;">OpenPips</div><div style="position:absolute;left:720.8px;top:253.45px;font-family:'Liberation Sans', sans-serif;font-size:16.5px;line-height:1;color:#8c8c8c;font-weight:400;white-space:nowrap;">0.00</div><div style="position:absolute;left:699.8px;top:273.44px;font-family:'Liberation Sans', sans-serif;font-size:12px;line-height:1;color:#8c8c8c;font-weight:700;white-space:nowrap;">OpenPos</div><div style="position:absolute;left:716.3px;top:284.47px;font-family:'Liberation Sans', sans-serif;font-size:13.3px;line-height:1;color:#8c8c8c;font-weight:400;white-space:nowrap;">0.00%</div><div style="position:absolute;left:701.3px;top:301.27px;font-family:'Liberation Sans', sans-serif;font-size:11.8px;line-height:1;color:#8c8c8c;font-weight:700;white-space:nowrap;">Daily P/L</div><div style="position:absolute;left:690px;top:312.28px;font-family:'Liberation Sans', sans-serif;font-size:13.2px;line-height:1;color:#f4e000;font-weight:400;white-space:nowrap;">-2417.24%</div><div style="position:absolute;left:590px;top:340px;width:173px;height:16px;overflow:hidden;"><svg width="12" height="16" style="left:0;top:0"><path d="M9 10.5l-4 2.5 4 2.5" fill="none" stroke="#30d0c0" stroke-width="1.2"/></svg><div style="position:absolute;left:8px;top:10.3px;font-family:'Liberation Mono',monospace;font-size:8.3px;font-weight:700;line-height:1;color:#3a9a6a;white-space:nowrap;letter-spacing:-0.1px;">WhaleLoaderAcc.s.</div><div style="position:absolute;left:9px;top:10.6px;font-family:'Liberation Mono',monospace;font-size:8.3px;font-weight:700;line-height:1;color:rgba(40,180,160,0.7);white-space:nowrap;letter-spacing:-0.1px;">HistoryExpertsFx.</div><div style="position:absolute;left:103px;top:10.5px;font-family:'Liberation Mono',monospace;font-size:8.1px;line-height:1;color:#30b0a0;white-space:nowrap;">Test Count = 1</div></div><div style="position:absolute;left:764.2px;top:344px;width:24.8px;height:6.1px;background:#a8a8a8;"></div><div style="position:absolute;left:766px;top:344.5px;font-family:'Liberation Sans', sans-serif;font-size:5.4px;line-height:1;color:#ffffff;font-weight:700;white-space:nowrap;">1.13323</div><div style="position:absolute;left:766.6px;top:63.42px;font-family:'Liberation Sans', sans-serif;font-size:6px;line-height:1;color:#a0a0a0;font-weight:400;white-space:nowrap;transform:scaleX(0.97);transform-origin:0 0;">1.37470</div><div style="position:absolute;left:766.6px;top:84.07px;font-family:'Liberation Sans', sans-serif;font-size:6px;line-height:1;color:#a0a0a0;font-weight:400;white-space:nowrap;transform:scaleX(0.97);transform-origin:0 0;">1.35720</div><div style="position:absolute;left:766.6px;top:104.72px;font-family:'Liberation Sans', sans-serif;font-size:6px;line-height:1;color:#a0a0a0;font-weight:400;white-space:nowrap;transform:scaleX(0.97);transform-origin:0 0;">1.33970</div><div style="position:absolute;left:766.6px;top:125.37px;font-family:'Liberation Sans', sans-serif;font-size:6px;line-height:1;color:#a0a0a0;font-weight:400;white-space:nowrap;transform:scaleX(0.97);transform-origin:0 0;">1.32170</div><div style="position:absolute;left:766.6px;top:146.02px;font-family:'Liberation Sans', sans-serif;font-size:6px;line-height:1;color:#a0a0a0;font-weight:400;white-space:nowrap;transform:scaleX(0.97);transform-origin:0 0;">1.30420</div><div style="position:absolute;left:766.6px;top:166.67px;font-family:'Liberation Sans', sans-serif;font-size:6px;line-height:1;color:#a0a0a0;font-weight:400;white-space:nowrap;transform:scaleX(0.97);transform-origin:0 0;">1.28620</div><div style="position:absolute;left:766.6px;top:187.32px;font-family:'Liberation Sans', sans-serif;font-size:6px;line-height:1;color:#a0a0a0;font-weight:400;white-space:nowrap;transform:scaleX(0.97);transform-origin:0 0;">1.26870</div><div style="position:absolute;left:766.6px;top:207.97px;font-family:'Liberation Sans', sans-serif;font-size:6px;line-height:1;color:#a0a0a0;font-weight:400;white-space:nowrap;transform:scaleX(0.97);transform-origin:0 0;">1.25120</div><div style="position:absolute;left:766.6px;top:228.62px;font-family:'Liberation Sans', sans-serif;font-size:6px;line-height:1;color:#a0a0a0;font-weight:400;white-space:nowrap;transform:scaleX(0.97);transform-origin:0 0;">1.23320</div><div style="position:absolute;left:766.6px;top:249.27px;font-family:'Liberation Sans', sans-serif;font-size:6px;line-height:1;color:#a0a0a0;font-weight:400;white-space:nowrap;transform:scaleX(0.97);transform-origin:0 0;">1.21570</div><div style="position:absolute;left:766.6px;top:269.92px;font-family:'Liberation Sans', sans-serif;font-size:6px;line-height:1;color:#a0a0a0;font-weight:400;white-space:nowrap;transform:scaleX(0.97);transform-origin:0 0;">1.19770</div><div style="position:absolute;left:766.6px;top:290.57px;font-family:'Liberation Sans', sans-serif;font-size:6px;line-height:1;color:#a0a0a0;font-weight:400;white-space:nowrap;transform:scaleX(0.97);transform-origin:0 0;">1.18020</div><div style="position:absolute;left:766.6px;top:311.22px;font-family:'Liberation Sans', sans-serif;font-size:6px;line-height:1;color:#a0a0a0;font-weight:400;white-space:nowrap;transform:scaleX(0.97);transform-origin:0 0;">1.16220</div><div style="position:absolute;left:766.6px;top:331.87px;font-family:'Liberation Sans', sans-serif;font-size:6px;line-height:1;color:#a0a0a0;font-weight:400;white-space:nowrap;transform:scaleX(0.97);transform-origin:0 0;">1.14470</div><div style="position:absolute;left:766.6px;top:352.52px;font-family:'Liberation Sans', sans-serif;font-size:6px;line-height:1;color:#a0a0a0;font-weight:400;white-space:nowrap;transform:scaleX(0.97);transform-origin:0 0;">1.12720</div><div style="position:absolute;left:5.5px;top:360.57px;font-family:'Liberation Sans', sans-serif;font-size:6.4px;line-height:1;color:#9a968e;font-weight:400;white-space:nowrap;transform:scaleX(0.912);transform-origin:0 0;">XU v6-AllAbsoluteStrength_v2.4 600+ 0.00000 62.20665 0.00000 52.17000 415.72561 207.86281</div><div style="position:absolute;left:766px;top:359.85px;font-family:'Liberation Sans', sans-serif;font-size:5.8px;line-height:1;color:#a0a0a0;font-weight:400;white-space:nowrap;">436.51185</div><div style="position:absolute;left:766px;top:432.25px;font-family:'Liberation Sans', sans-serif;font-size:5.8px;line-height:1;color:#a0a0a0;font-weight:400;white-space:nowrap;">20</div><div style="position:absolute;left:766px;top:457.35px;font-family:'Liberation Sans', sans-serif;font-size:5.8px;line-height:1;color:#a0a0a0;font-weight:400;white-space:nowrap;">0.0078628</div><div style="position:absolute;left:3px;top:466.77px;font-family:'Liberation Sans', sans-serif;font-size:6.4px;line-height:1;color:#a09a90;font-weight:400;white-space:nowrap;transform:scaleX(0.885);transform-origin:0 0;">28 Dec 2021</div><div style="position:absolute;left:43px;top:466.77px;font-family:'Liberation Sans', sans-serif;font-size:6.4px;line-height:1;color:#a09a90;font-weight:400;white-space:nowrap;transform:scaleX(0.885);transform-origin:0 0;">28 Dec 04:50</div><div style="position:absolute;left:83px;top:466.77px;font-family:'Liberation Sans', sans-serif;font-size:6.4px;line-height:1;color:#a09a90;font-weight:400;white-space:nowrap;transform:scaleX(0.885);transform-origin:0 0;">28 Dec 05:30</div><div style="position:absolute;left:123px;top:466.77px;font-family:'Liberation Sans', sans-serif;font-size:6.4px;line-height:1;color:#a09a90;font-weight:400;white-space:nowrap;transform:scaleX(0.885);transform-origin:0 0;">28 Dec 06:10</div><div style="position:absolute;left:163px;top:466.77px;font-family:'Liberation Sans', sans-serif;font-size:6.4px;line-height:1;color:#a09a90;font-weight:400;white-space:nowrap;transform:scaleX(0.885);transform-origin:0 0;">28 Dec 06:50</div><div style="position:absolute;left:203px;top:466.77px;font-family:'Liberation Sans', sans-serif;font-size:6.4px;line-height:1;color:#a09a90;font-weight:400;white-space:nowrap;transform:scaleX(0.885);transform-origin:0 0;">28 Dec 07:30</div><div style="position:absolute;left:243px;top:466.77px;font-family:'Liberation Sans', sans-serif;font-size:6.4px;line-height:1;color:#a09a90;font-weight:400;white-space:nowrap;transform:scaleX(0.885);transform-origin:0 0;">28 Dec 08:10</div><div style="position:absolute;left:283px;top:466.77px;font-family:'Liberation Sans', sans-serif;font-size:6.4px;line-height:1;color:#a09a90;font-weight:400;white-space:nowrap;transform:scaleX(0.885);transform-origin:0 0;">28 Dec 08:50</div><div style="position:absolute;left:323px;top:466.77px;font-family:'Liberation Sans', sans-serif;font-size:6.4px;line-height:1;color:#a09a90;font-weight:400;white-space:nowrap;transform:scaleX(0.885);transform-origin:0 0;">28 Dec 09:30</div><div style="position:absolute;left:363px;top:466.77px;font-family:'Liberation Sans', sans-serif;font-size:6.4px;line-height:1;color:#a09a90;font-weight:400;white-space:nowrap;transform:scaleX(0.885);transform-origin:0 0;">28 Dec 10:10</div><div style="position:absolute;left:403px;top:466.77px;font-family:'Liberation Sans', sans-serif;font-size:6.4px;line-height:1;color:#a09a90;font-weight:400;white-space:nowrap;transform:scaleX(0.885);transform-origin:0 0;">28 Dec 10:50</div><div style="position:absolute;left:443px;top:466.77px;font-family:'Liberation Sans', sans-serif;font-size:6.4px;line-height:1;color:#a09a90;font-weight:400;white-space:nowrap;transform:scaleX(0.885);transform-origin:0 0;">28 Dec 11:30</div><div style="position:absolute;left:483px;top:466.77px;font-family:'Liberation Sans', sans-serif;font-size:6.4px;line-height:1;color:#a09a90;font-weight:400;white-space:nowrap;transform:scaleX(0.885);transform-origin:0 0;">28 Dec 12:10</div><div style="position:absolute;left:523px;top:466.77px;font-family:'Liberation Sans', sans-serif;font-size:6.4px;line-height:1;color:#a09a90;font-weight:400;white-space:nowrap;transform:scaleX(0.885);transform-origin:0 0;">28 Dec 12:50</div><div style="position:absolute;left:563px;top:466.77px;font-family:'Liberation Sans', sans-serif;font-size:6.4px;line-height:1;color:#a09a90;font-weight:400;white-space:nowrap;transform:scaleX(0.885);transform-origin:0 0;">28 Dec 13:30</div><div style="position:absolute;left:0px;top:477px;width:800px;height:138px;background:#f0f0f0;"></div><div style="position:absolute;left:0px;top:478.3px;width:4.5px;height:1px;background:#505050;"></div><div style="position:absolute;left:55.5px;top:478.3px;width:744.5px;height:1px;background:#505050;"></div><div style="position:absolute;left:0px;top:477px;width:1px;height:13px;background:#8a8a8a;"></div><div style="position:absolute;left:3.7px;top:478.3px;width:52.3px;height:11.8px;background:#fff;border:1px solid #3a3a3a;border-top:none;"></div><div style="position:absolute;left:10px;top:480.9px;font-family:'Liberation Sans', sans-serif;font-size:7.7px;line-height:1;color:#1a1a1a;font-weight:400;white-space:nowrap;transform:scaleX(0.91);transform-origin:0 0;">EURUSD,M5</div><div style="position:absolute;left:62.6px;top:480.9px;font-family:'Liberation Sans', sans-serif;font-size:7.7px;line-height:1;color:#8a8a8a;font-weight:400;white-space:nowrap;transform:scaleX(0.91);transform-origin:0 0;">EURUSD,M5</div><div style="position:absolute;left:108.5px;top:481px;width:1px;height:8px;background:#999;"></div><svg width="30" height="10" style="left:776px;top:479px"><path d="M7 5l3-2.5v5z" fill="#888"/><path d="M18.5 2.5l3 2.5-3 2.5z" fill="#888"/></svg><svg width="10" height="10" style="left:0;top:492px"><path d="M2.5 2.5l3 3M5.5 2.5l-3 3" stroke="#222" stroke-width="1"/></svg><div style="position:absolute;left:0.5px;top:501px;width:8.5px;height:111px;background:#d2e0ee;border-right:1px solid #c4d2e0;"></div><div style="position:absolute;left:0.5px;top:611.5px;width:110px;height:8.5px;transform:rotate(-90deg);transform-origin:0 0;font-family:'Liberation Sans',sans-serif;font-size:7.6px;line-height:8.5px;color:#2a2a2a;font-weight:400;white-space:nowrap;text-align:left;padding-left:1px;">Terminal</div><div style="position:absolute;left:9.5px;top:492.5px;width:788px;height:106px;background:#fff;"></div><div style="position:absolute;left:9.5px;top:492.5px;width:788px;height:1px;background:#d0d0d0;"></div><div style="position:absolute;left:9.5px;top:508.2px;width:788px;height:1px;background:#e4e4e4;"></div><div style="position:absolute;left:9.5px;top:521.6px;width:788px;height:12.399999999999977px;background:#ebebeb;"></div><div style="position:absolute;left:9.5px;top:546.4px;width:788px;height:12.300000000000068px;background:#ebebeb;"></div><div style="position:absolute;left:9.5px;top:521.1px;width:788px;height:1px;background:#e8e8e8;"></div><div style="position:absolute;left:9.5px;top:533.5px;width:788px;height:1px;background:#e8e8e8;"></div><div style="position:absolute;left:9.5px;top:545.9px;width:788px;height:1px;background:#e8e8e8;"></div><div style="position:absolute;left:9.5px;top:558.2px;width:788px;height:1px;background:#e8e8e8;"></div><div style="position:absolute;left:9.5px;top:570.6px;width:788px;height:1px;background:#e8e8e8;"></div><div style="position:absolute;left:9.5px;top:571.1px;width:788px;height:12.5px;background:#c9c9c9;"></div><div style="position:absolute;left:79.7px;top:493.5px;width:1px;height:77.6px;background:#e2e2e2;"></div><div style="position:absolute;left:198px;top:493.5px;width:1px;height:77.6px;background:#e2e2e2;"></div><div style="position:absolute;left:251px;top:493.5px;width:1px;height:77.6px;background:#e2e2e2;"></div><div style="position:absolute;left:294px;top:493.5px;width:1px;height:77.6px;background:#e2e2e2;"></div><div style="position:absolute;left:348.5px;top:493.5px;width:1px;height:77.6px;background:#e2e2e2;"></div><div style="position:absolute;left:401.7px;top:493.5px;width:1px;height:77.6px;background:#e2e2e2;"></div><div style="position:absolute;left:455px;top:493.5px;width:1px;height:77.6px;background:#e2e2e2;"></div><div style="position:absolute;left:509px;top:493.5px;width:1px;height:77.6px;background:#e2e2e2;"></div><div style="position:absolute;left:627.5px;top:493.5px;width:1px;height:77.6px;background:#e2e2e2;"></div><div style="position:absolute;left:682.5px;top:493.5px;width:1px;height:77.6px;background:#e2e2e2;"></div><div style="position:absolute;left:735px;top:493.5px;width:1px;height:77.6px;background:#e2e2e2;"></div><div style="position:absolute;left:401.7px;top:534.0px;width:53.3px;height:12.4px;background:#f6a2a2;"></div><div style="position:absolute;left:14px;top:497.65px;font-family:'Liberation Sans', sans-serif;font-size:8.1px;line-height:1;color:#262626;font-weight:400;white-space:nowrap;transform:scaleX(0.85);transform-origin:0 0;">Order</div><div style="position:absolute;left:38.5px;top:498.09px;font-family:'Liberation Sans', sans-serif;font-size:5.5px;line-height:1;color:#999;font-weight:400;white-space:nowrap;">/</div><div style="position:absolute;right:605.8px;top:497.65px;font-family:'Liberation Sans', sans-serif;font-size:8.1px;line-height:1;color:#262626;font-weight:400;white-space:nowrap;text-align:right;transform:scaleX(0.85);transform-origin:100% 0;">Time</div><div style="position:absolute;right:552px;top:497.65px;font-family:'Liberation Sans', sans-serif;font-size:8.1px;line-height:1;color:#262626;font-weight:400;white-space:nowrap;text-align:right;transform:scaleX(0.85);transform-origin:100% 0;">Type</div><div style="position:absolute;right:508.8px;top:497.65px;font-family:'Liberation Sans', sans-serif;font-size:8.1px;line-height:1;color:#262626;font-weight:400;white-space:nowrap;text-align:right;transform:scaleX(0.85);transform-origin:100% 0;">Size</div><div style="position:absolute;right:455.2px;top:497.65px;font-family:'Liberation Sans', sans-serif;font-size:8.1px;line-height:1;color:#262626;font-weight:400;white-space:nowrap;text-align:right;transform:scaleX(0.85);transform-origin:100% 0;">Symbol</div><div style="position:absolute;right:401.7px;top:497.65px;font-family:'Liberation Sans', sans-serif;font-size:8.1px;line-height:1;color:#262626;font-weight:400;white-space:nowrap;text-align:right;transform:scaleX(0.85);transform-origin:100% 0;">Price</div><div style="position:absolute;right:347.5px;top:497.65px;font-family:'Liberation Sans', sans-serif;font-size:8.1px;line-height:1;color:#262626;font-weight:400;white-space:nowrap;text-align:right;transform:scaleX(0.85);transform-origin:100% 0;">S / L</div><div style="position:absolute;right:294px;top:497.65px;font-family:'Liberation Sans', sans-serif;font-size:8.1px;line-height:1;color:#262626;font-weight:400;white-space:nowrap;text-align:right;transform:scaleX(0.85);transform-origin:100% 0;">T / P</div><div style="position:absolute;right:174.5px;top:497.65px;font-family:'Liberation Sans', sans-serif;font-size:8.1px;line-height:1;color:#262626;font-weight:400;white-space:nowrap;text-align:right;transform:scaleX(0.85);transform-origin:100% 0;">Time</div><div style="position:absolute;right:121.5px;top:497.65px;font-family:'Liberation Sans', sans-serif;font-size:8.1px;line-height:1;color:#262626;font-weight:400;white-space:nowrap;text-align:right;transform:scaleX(0.85);transform-origin:100% 0;">Price</div><div style="position:absolute;right:68.10000000000002px;top:497.65px;font-family:'Liberation Sans', sans-serif;font-size:8.1px;line-height:1;color:#262626;font-weight:400;white-space:nowrap;text-align:right;transform:scaleX(0.85);transform-origin:100% 0;">Swap</div><div style="position:absolute;right:6.5px;top:497.65px;font-family:'Liberation Sans', sans-serif;font-size:8.1px;line-height:1;color:#262626;font-weight:400;white-space:nowrap;text-align:right;transform:scaleX(0.85);transform-origin:100% 0;">Profit</div><div style="position:absolute;left:24.2px;top:511.25px;font-family:'Liberation Sans', sans-serif;font-size:8.1px;line-height:1;color:#262626;font-weight:400;white-space:nowrap;transform:scaleX(0.82);transform-origin:0 0;">319862372</div><div style="position:absolute;right:604.3px;top:511.45px;font-family:'Liberation Sans', sans-serif;font-size:8.1px;line-height:1;color:#262626;font-weight:400;white-space:nowrap;text-align:right;transform:scaleX(0.85);transform-origin:100% 0;">2021.12.27 12:17:54</div><div style="position:absolute;right:550.8px;top:511.45px;font-family:'Liberation Sans', sans-serif;font-size:8.1px;line-height:1;color:#262626;font-weight:400;white-space:nowrap;text-align:right;transform:scaleX(0.85);transform-origin:100% 0;">buy</div><div style="position:absolute;right:508.2px;top:511.45px;font-family:'Liberation Sans', sans-serif;font-size:8.1px;line-height:1;color:#262626;font-weight:400;white-space:nowrap;text-align:right;transform:scaleX(0.85);transform-origin:100% 0;">0.02</div><div style="position:absolute;right:454.5px;top:511.45px;font-family:'Liberation Sans', sans-serif;font-size:8.1px;line-height:1;color:#262626;font-weight:400;white-space:nowrap;text-align:right;transform:scaleX(0.85);transform-origin:100% 0;">eurusd</div><div style="position:absolute;right:401px;top:511.45px;font-family:'Liberation Sans', sans-serif;font-size:8.1px;line-height:1;color:#262626;font-weight:400;white-space:nowrap;text-align:right;transform:scaleX(0.85);transform-origin:100% 0;">1.13169</div><div style="position:absolute;right:346.5px;top:511.45px;font-family:'Liberation Sans', sans-serif;font-size:8.1px;line-height:1;color:#262626;font-weight:400;white-space:nowrap;text-align:right;transform:scaleX(0.85);transform-origin:100% 0;">1.12876</div><div style="position:absolute;right:292.5px;top:511.45px;font-family:'Liberation Sans', sans-serif;font-size:8.1px;line-height:1;color:#262626;font-weight:400;white-space:nowrap;text-align:right;transform:scaleX(0.85);transform-origin:100% 0;">0.00000</div><div style="position:absolute;right:174px;top:511.45px;font-family:'Liberation Sans', sans-serif;font-size:8.1px;line-height:1;color:#262626;font-weight:400;white-space:nowrap;text-align:right;transform:scaleX(0.85);transform-origin:100% 0;">2021.12.28 07:29:22</div><div style="position:absolute;right:120px;top:511.45px;font-family:'Liberation Sans', sans-serif;font-size:8.1px;line-height:1;color:#262626;font-weight:400;white-space:nowrap;text-align:right;transform:scaleX(0.85);transform-origin:100% 0;">1.13260</div><div style="position:absolute;right:67px;top:511.45px;font-family:'Liberation Sans', sans-serif;font-size:8.1px;line-height:1;color:#262626;font-weight:400;white-space:nowrap;text-align:right;transform:scaleX(0.85);transform-origin:100% 0;">0.00</div><div style="position:absolute;right:5px;top:511.45px;font-family:'Liberation Sans', sans-serif;font-size:8.1px;line-height:1;color:#262626;font-weight:400;white-space:nowrap;text-align:right;transform:scaleX(0.85);transform-origin:100% 0;">1.82</div><div style="position:absolute;left:24.2px;top:523.65px;font-family:'Liberation Sans', sans-serif;font-size:8.1px;line-height:1;color:#262626;font-weight:400;white-space:nowrap;transform:scaleX(0.82);transform-origin:0 0;">319892209</div><div style="position:absolute;right:604.3px;top:523.85px;font-family:'Liberation Sans', sans-serif;font-size:8.1px;line-height:1;color:#262626;font-weight:400;white-space:nowrap;text-align:right;transform:scaleX(0.85);transform-origin:100% 0;">2021.12.27 14:59:30</div><div style="position:absolute;right:550.8px;top:523.85px;font-family:'Liberation Sans', sans-serif;font-size:8.1px;line-height:1;color:#262626;font-weight:400;white-space:nowrap;text-align:right;transform:scaleX(0.85);transform-origin:100% 0;">buy</div><div style="position:absolute;right:508.2px;top:523.85px;font-family:'Liberation Sans', sans-serif;font-size:8.1px;line-height:1;color:#262626;font-weight:400;white-space:nowrap;text-align:right;transform:scaleX(0.85);transform-origin:100% 0;">0.02</div><div style="position:absolute;right:454.5px;top:523.85px;font-family:'Liberation Sans', sans-serif;font-size:8.1px;line-height:1;color:#262626;font-weight:400;white-space:nowrap;text-align:right;transform:scaleX(0.85);transform-origin:100% 0;">eurusd</div><div style="position:absolute;right:401px;top:523.85px;font-family:'Liberation Sans', sans-serif;font-size:8.1px;line-height:1;color:#262626;font-weight:400;white-space:nowrap;text-align:right;transform:scaleX(0.85);transform-origin:100% 0;">1.13146</div><div style="position:absolute;right:346.5px;top:523.85px;font-family:'Liberation Sans', sans-serif;font-size:8.1px;line-height:1;color:#262626;font-weight:400;white-space:nowrap;text-align:right;transform:scaleX(0.85);transform-origin:100% 0;">0.00000</div><div style="position:absolute;right:292.5px;top:523.85px;font-family:'Liberation Sans', sans-serif;font-size:8.1px;line-height:1;color:#262626;font-weight:400;white-space:nowrap;text-align:right;transform:scaleX(0.85);transform-origin:100% 0;">0.00000</div><div style="position:absolute;right:174px;top:523.85px;font-family:'Liberation Sans', sans-serif;font-size:8.1px;line-height:1;color:#262626;font-weight:400;white-space:nowrap;text-align:right;transform:scaleX(0.85);transform-origin:100% 0;">2021.12.28 07:29:26</div><div style="position:absolute;right:120px;top:523.85px;font-family:'Liberation Sans', sans-serif;font-size:8.1px;line-height:1;color:#262626;font-weight:400;white-space:nowrap;text-align:right;transform:scaleX(0.85);transform-origin:100% 0;">1.13260</div><div style="position:absolute;right:67px;top:523.85px;font-family:'Liberation Sans', sans-serif;font-size:8.1px;line-height:1;color:#262626;font-weight:400;white-space:nowrap;text-align:right;transform:scaleX(0.85);transform-origin:100% 0;">0.00</div><div style="position:absolute;right:5px;top:523.85px;font-family:'Liberation Sans', sans-serif;font-size:8.1px;line-height:1;color:#262626;font-weight:400;white-space:nowrap;text-align:right;transform:scaleX(0.85);transform-origin:100% 0;">2.28</div><div style="position:absolute;left:24.2px;top:536.05px;font-family:'Liberation Sans', sans-serif;font-size:8.1px;line-height:1;color:#262626;font-weight:400;white-space:nowrap;transform:scaleX(0.82);transform-origin:0 0;">320025431</div><div style="position:absolute;right:604.3px;top:536.25px;font-family:'Liberation Sans', sans-serif;font-size:8.1px;line-height:1;color:#262626;font-weight:400;white-space:nowrap;text-align:right;transform:scaleX(0.85);transform-origin:100% 0;">2021.12.28 09:21:08</div><div style="position:absolute;right:550.8px;top:536.25px;font-family:'Liberation Sans', sans-serif;font-size:8.1px;line-height:1;color:#262626;font-weight:400;white-space:nowrap;text-align:right;transform:scaleX(0.85);transform-origin:100% 0;">sell</div><div style="position:absolute;right:508.2px;top:536.25px;font-family:'Liberation Sans', sans-serif;font-size:8.1px;line-height:1;color:#262626;font-weight:400;white-space:nowrap;text-align:right;transform:scaleX(0.85);transform-origin:100% 0;">0.03</div><div style="position:absolute;right:454.5px;top:536.25px;font-family:'Liberation Sans', sans-serif;font-size:8.1px;line-height:1;color:#262626;font-weight:400;white-space:nowrap;text-align:right;transform:scaleX(0.85);transform-origin:100% 0;">eurusd</div><div style="position:absolute;right:401px;top:536.25px;font-family:'Liberation Sans', sans-serif;font-size:8.1px;line-height:1;color:#262626;font-weight:400;white-space:nowrap;text-align:right;transform:scaleX(0.85);transform-origin:100% 0;">1.13228</div><div style="position:absolute;right:346.5px;top:536.25px;font-family:'Liberation Sans', sans-serif;font-size:8.1px;line-height:1;color:#262626;font-weight:400;white-space:nowrap;text-align:right;transform:scaleX(0.85);transform-origin:100% 0;">1.13436</div><div style="position:absolute;right:292.5px;top:536.25px;font-family:'Liberation Sans', sans-serif;font-size:8.1px;line-height:1;color:#262626;font-weight:400;white-space:nowrap;text-align:right;transform:scaleX(0.85);transform-origin:100% 0;">0.00000</div><div style="position:absolute;right:174px;top:536.25px;font-family:'Liberation Sans', sans-serif;font-size:8.1px;line-height:1;color:#262626;font-weight:400;white-space:nowrap;text-align:right;transform:scaleX(0.85);transform-origin:100% 0;">2021.12.28 13:19:35</div><div style="position:absolute;right:120px;top:536.25px;font-family:'Liberation Sans', sans-serif;font-size:8.1px;line-height:1;color:#262626;font-weight:400;white-space:nowrap;text-align:right;transform:scaleX(0.85);transform-origin:100% 0;">1.36536</div><div style="position:absolute;right:67px;top:536.25px;font-family:'Liberation Sans', sans-serif;font-size:8.1px;line-height:1;color:#262626;font-weight:400;white-space:nowrap;text-align:right;transform:scaleX(0.85);transform-origin:100% 0;">0.00</div><div style="position:absolute;right:5px;top:536.25px;font-family:'Liberation Sans', sans-serif;font-size:8.1px;line-height:1;color:#262626;font-weight:400;white-space:nowrap;text-align:right;transform:scaleX(0.85);transform-origin:100% 0;">-699.24</div><div style="position:absolute;left:24.2px;top:548.45px;font-family:'Liberation Sans', sans-serif;font-size:8.1px;line-height:1;color:#262626;font-weight:400;white-space:nowrap;transform:scaleX(0.82);transform-origin:0 0;">320033553</div><div style="position:absolute;right:604.3px;top:548.65px;font-family:'Liberation Sans', sans-serif;font-size:8.1px;line-height:1;color:#262626;font-weight:400;white-space:nowrap;text-align:right;transform:scaleX(0.85);transform-origin:100% 0;">2021.12.28 10:08:53</div><div style="position:absolute;right:550.8px;top:548.65px;font-family:'Liberation Sans', sans-serif;font-size:8.1px;line-height:1;color:#262626;font-weight:400;white-space:nowrap;text-align:right;transform:scaleX(0.85);transform-origin:100% 0;">sell</div><div style="position:absolute;right:508.2px;top:548.65px;font-family:'Liberation Sans', sans-serif;font-size:8.1px;line-height:1;color:#262626;font-weight:400;white-space:nowrap;text-align:right;transform:scaleX(0.85);transform-origin:100% 0;">0.02</div><div style="position:absolute;right:454.5px;top:548.65px;font-family:'Liberation Sans', sans-serif;font-size:8.1px;line-height:1;color:#262626;font-weight:400;white-space:nowrap;text-align:right;transform:scaleX(0.85);transform-origin:100% 0;">eurusd</div><div style="position:absolute;right:401px;top:548.65px;font-family:'Liberation Sans', sans-serif;font-size:8.1px;line-height:1;color:#262626;font-weight:400;white-space:nowrap;text-align:right;transform:scaleX(0.85);transform-origin:100% 0;">1.13198</div><div style="position:absolute;right:346.5px;top:548.65px;font-family:'Liberation Sans', sans-serif;font-size:8.1px;line-height:1;color:#262626;font-weight:400;white-space:nowrap;text-align:right;transform:scaleX(0.85);transform-origin:100% 0;">0.00000</div><div style="position:absolute;right:292.5px;top:548.65px;font-family:'Liberation Sans', sans-serif;font-size:8.1px;line-height:1;color:#262626;font-weight:400;white-space:nowrap;text-align:right;transform:scaleX(0.85);transform-origin:100% 0;">0.00000</div><div style="position:absolute;right:174px;top:548.65px;font-family:'Liberation Sans', sans-serif;font-size:8.1px;line-height:1;color:#262626;font-weight:400;white-space:nowrap;text-align:right;transform:scaleX(0.85);transform-origin:100% 0;">2021.12.28 13:19:40</div><div style="position:absolute;right:120px;top:548.65px;font-family:'Liberation Sans', sans-serif;font-size:8.1px;line-height:1;color:#262626;font-weight:400;white-space:nowrap;text-align:right;transform:scaleX(0.85);transform-origin:100% 0;">1.36536</div><div style="position:absolute;right:67px;top:548.65px;font-family:'Liberation Sans', sans-serif;font-size:8.1px;line-height:1;color:#262626;font-weight:400;white-space:nowrap;text-align:right;transform:scaleX(0.85);transform-origin:100% 0;">0.00</div><div style="position:absolute;right:5px;top:548.65px;font-family:'Liberation Sans', sans-serif;font-size:8.1px;line-height:1;color:#262626;font-weight:400;white-space:nowrap;text-align:right;transform:scaleX(0.85);transform-origin:100% 0;">-466.76</div><div style="position:absolute;left:24.2px;top:560.75px;font-family:'Liberation Sans', sans-serif;font-size:8.1px;line-height:1;color:#262626;font-weight:400;white-space:nowrap;transform:scaleX(0.82);transform-origin:0 0;">320065706</div><div style="position:absolute;right:604.3px;top:560.95px;font-family:'Liberation Sans', sans-serif;font-size:8.1px;line-height:1;color:#262626;font-weight:400;white-space:nowrap;text-align:right;transform:scaleX(0.85);transform-origin:100% 0;">2021.12.28 13:05:36</div><div style="position:absolute;right:550.8px;top:560.95px;font-family:'Liberation Sans', sans-serif;font-size:8.1px;line-height:1;color:#262626;font-weight:400;white-space:nowrap;text-align:right;transform:scaleX(0.85);transform-origin:100% 0;">sell</div><div style="position:absolute;right:508.2px;top:560.95px;font-family:'Liberation Sans', sans-serif;font-size:8.1px;line-height:1;color:#262626;font-weight:400;white-space:nowrap;text-align:right;transform:scaleX(0.85);transform-origin:100% 0;">0.05</div><div style="position:absolute;right:454.5px;top:560.95px;font-family:'Liberation Sans', sans-serif;font-size:8.1px;line-height:1;color:#262626;font-weight:400;white-space:nowrap;text-align:right;transform:scaleX(0.85);transform-origin:100% 0;">eurusd</div><div style="position:absolute;right:401px;top:560.95px;font-family:'Liberation Sans', sans-serif;font-size:8.1px;line-height:1;color:#262626;font-weight:400;white-space:nowrap;text-align:right;transform:scaleX(0.85);transform-origin:100% 0;">1.13276</div><div style="position:absolute;right:346.5px;top:560.95px;font-family:'Liberation Sans', sans-serif;font-size:8.1px;line-height:1;color:#262626;font-weight:400;white-space:nowrap;text-align:right;transform:scaleX(0.85);transform-origin:100% 0;">0.00000</div><div style="position:absolute;right:292.5px;top:560.95px;font-family:'Liberation Sans', sans-serif;font-size:8.1px;line-height:1;color:#262626;font-weight:400;white-space:nowrap;text-align:right;transform:scaleX(0.85);transform-origin:100% 0;">0.00000</div><div style="position:absolute;right:174px;top:560.95px;font-family:'Liberation Sans', sans-serif;font-size:8.1px;line-height:1;color:#262626;font-weight:400;white-space:nowrap;text-align:right;transform:scaleX(0.85);transform-origin:100% 0;">2021.12.28 13:19:36</div><div style="position:absolute;right:120px;top:560.95px;font-family:'Liberation Sans', sans-serif;font-size:8.1px;line-height:1;color:#262626;font-weight:400;white-space:nowrap;text-align:right;transform:scaleX(0.85);transform-origin:100% 0;">1.36536</div><div style="position:absolute;right:67px;top:560.95px;font-family:'Liberation Sans', sans-serif;font-size:8.1px;line-height:1;color:#262626;font-weight:400;white-space:nowrap;text-align:right;transform:scaleX(0.85);transform-origin:100% 0;">0.00</div><div style="position:absolute;right:5px;top:560.95px;font-family:'Liberation Sans', sans-serif;font-size:8.1px;line-height:1;color:#262626;font-weight:400;white-space:nowrap;text-align:right;transform:scaleX(0.85);transform-origin:100% 0;">-1 163.00</div><svg width="30" height="615" style="left:0;top:0"><path d="M12.5 510.7h4.5l2 2v7.5h-6.5z" fill="#fff" stroke="#777" stroke-width="0.8"/><circle cx="18.3" cy="518.5" r="2.2" fill="#2a8ae0"/><path d="M12.5 523.1h4.5l2 2v7.5h-6.5z" fill="#fff" stroke="#777" stroke-width="0.8"/><circle cx="18.3" cy="530.9" r="2.2" fill="#2a8ae0"/><path d="M12.5 535.5h4.5l2 2v7.5h-6.5z" fill="#fff" stroke="#777" stroke-width="0.8"/><circle cx="18.3" cy="543.3" r="2.2" fill="#e04a20"/><path d="M12.5 547.9h4.5l2 2v7.5h-6.5z" fill="#fff" stroke="#777" stroke-width="0.8"/><circle cx="18.3" cy="555.6999999999999" r="2.2" fill="#e04a20"/><path d="M12.5 560.2h4.5l2 2v7.5h-6.5z" fill="#fff" stroke="#777" stroke-width="0.8"/><circle cx="18.3" cy="568.0" r="2.2" fill="#e04a20"/><circle cx="16.5" cy="577.3" r="2.3" fill="none" stroke="#999" stroke-width="0.8"/></svg><div style="position:absolute;left:24.2px;top:573.21px;font-family:'Liberation Sans', sans-serif;font-size:7.6px;line-height:1;color:#1a1a1a;font-weight:700;white-space:nowrap;transform:scaleX(0.963);transform-origin:0 0;">Profit/Loss: -2 324.90&nbsp; Credit: 0.00&nbsp; Deposit: 0.00&nbsp; Withdrawal: 0.00</div><div style="position:absolute;right:5.2000000000000455px;top:573.02px;font-family:'Liberation Sans', sans-serif;font-size:7.5px;line-height:1;color:#1a1a1a;font-weight:700;white-space:nowrap;text-align:right;">-2 324.90</div><div style="position:absolute;left:619.5px;top:560.97px;font-family:'Liberation Sans', sans-serif;font-size:11px;line-height:1;color:rgba(130,130,130,0.5);font-weight:400;white-space:nowrap;transform:scaleX(1.12);transform-origin:0 0;">Activate Windows</div><div style="position:absolute;left:619.5px;top:574.99px;font-family:'Liberation Sans', sans-serif;font-size:9.3px;line-height:1;color:rgba(130,130,130,0.5);font-weight:400;white-space:nowrap;">Go to Settings to activate Windows.</div><div style="position:absolute;left:9px;top:598px;width:788.8px;height:1px;background:#505050;"></div><div style="position:absolute;left:9px;top:599px;width:791px;height:13px;background:#f0f0f0;"></div><div style="position:absolute;left:84.4px;top:597.5px;width:65.6px;height:13px;background:#fff;border:1px solid #333;border-top:none;"></div><div style="position:absolute;left:0px;top:612.5px;width:800px;height:2.5px;background:#d8d8d8;"></div><div style="position:absolute;left:17.8px;top:600.64px;font-family:'Liberation Sans', sans-serif;font-size:7.4px;line-height:1;color:#777;font-weight:400;white-space:nowrap;transform:scaleX(0.93);transform-origin:0 0;">Trade</div><div style="position:absolute;left:48.4px;top:600.64px;font-family:'Liberation Sans', sans-serif;font-size:7.4px;line-height:1;color:#777;font-weight:400;white-space:nowrap;transform:scaleX(0.93);transform-origin:0 0;">Exposure</div><div style="position:absolute;left:90.6px;top:600.61px;font-family:'Liberation Sans', sans-serif;font-size:7.6px;line-height:1;color:#111;font-weight:400;white-space:nowrap;transform:scaleX(0.99);transform-origin:0 0;">Account History</div><div style="position:absolute;left:157px;top:600.64px;font-family:'Liberation Sans', sans-serif;font-size:7.4px;line-height:1;color:#777;font-weight:400;white-space:nowrap;transform:scaleX(0.93);transform-origin:0 0;">News</div><div style="position:absolute;left:195px;top:600.64px;font-family:'Liberation Sans', sans-serif;font-size:7.4px;line-height:1;color:#777;font-weight:400;white-space:nowrap;transform:scaleX(0.93);transform-origin:0 0;">Alerts</div><div style="position:absolute;left:226.5px;top:600.64px;font-family:'Liberation Sans', sans-serif;font-size:7.4px;line-height:1;color:#777;font-weight:400;white-space:nowrap;transform:scaleX(0.93);transform-origin:0 0;">Mailbox</div><div style="position:absolute;left:275.5px;top:600.64px;font-family:'Liberation Sans', sans-serif;font-size:7.4px;line-height:1;color:#777;font-weight:400;white-space:nowrap;transform:scaleX(0.93);transform-origin:0 0;">Market</div><div style="position:absolute;left:319px;top:600.64px;font-family:'Liberation Sans', sans-serif;font-size:7.4px;line-height:1;color:#777;font-weight:400;white-space:nowrap;transform:scaleX(0.93);transform-origin:0 0;">Articles</div><div style="position:absolute;left:355.5px;top:600.64px;font-family:'Liberation Sans', sans-serif;font-size:7.4px;line-height:1;color:#777;font-weight:400;white-space:nowrap;transform:scaleX(0.93);transform-origin:0 0;">Code Base</div><div style="position:absolute;left:402.5px;top:600.64px;font-family:'Liberation Sans', sans-serif;font-size:7.4px;line-height:1;color:#777;font-weight:400;white-space:nowrap;transform:scaleX(0.93);transform-origin:0 0;">Experts</div><div style="position:absolute;left:438.5px;top:600.64px;font-family:'Liberation Sans', sans-serif;font-size:7.4px;line-height:1;color:#777;font-weight:400;white-space:nowrap;transform:scaleX(0.93);transform-origin:0 0;">Journal</div><div style="position:absolute;left:42px;top:601px;width:1px;height:8px;background:#888;"></div><div style="position:absolute;left:189px;top:601px;width:1px;height:8px;background:#888;"></div><div style="position:absolute;left:220px;top:601px;width:1px;height:8px;background:#888;"></div><div style="position:absolute;left:268.5px;top:601px;width:1px;height:8px;background:#888;"></div><div style="position:absolute;left:312.5px;top:601px;width:1px;height:8px;background:#888;"></div><div style="position:absolute;left:348.5px;top:601px;width:1px;height:8px;background:#888;"></div><div style="position:absolute;left:397.5px;top:601px;width:1px;height:8px;background:#888;"></div><div style="position:absolute;left:432.5px;top:601px;width:1px;height:8px;background:#888;"></div><div style="position:absolute;left:467.5px;top:601px;width:1px;height:8px;background:#888;"></div><div style="position:absolute;left:176.5px;top:604.32px;font-family:'Liberation Sans', sans-serif;font-size:5.2px;line-height:1;color:#e02020;font-weight:700;white-space:nowrap;">72</div><div style="position:absolute;left:253.5px;top:604.32px;font-family:'Liberation Sans', sans-serif;font-size:5.2px;line-height:1;color:#e02020;font-weight:700;white-space:nowrap;">256</div><div style="position:absolute;left:299.5px;top:604.32px;font-family:'Liberation Sans', sans-serif;font-size:5.2px;line-height:1;color:#e02020;font-weight:700;white-space:nowrap;">97</div></body></html>
